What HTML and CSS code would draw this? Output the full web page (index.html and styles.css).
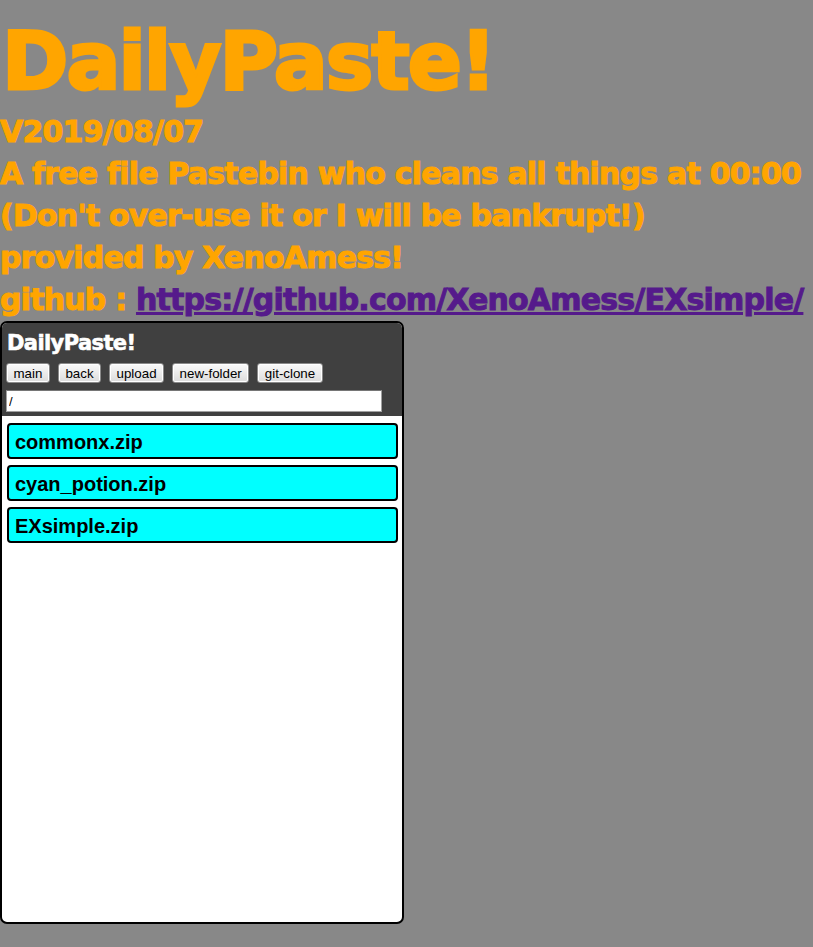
FILE: index.html
```html
<!DOCTYPE html>
<html>
<head>
<meta charset="utf-8">
<title>DailyPaste!</title>
<link rel="stylesheet" href="styles.css">
</head>
<body>
<h1 class="title">DailyPaste!</h1>
<div class="info">
  <div class="line">V2019/08/07</div>
  <div class="line">A free file Pastebin who cleans all things at 00:00</div>
  <div class="line">(Don't over-use it or I will be bankrupt!)</div>
  <div class="line">provided by XenoAmess!</div>
  <div class="line">github : <a class="repo" href="#">https://github.com/XenoAmess/EXsimple/</a></div>
</div>
<div class="panel">
  <div class="panel-head">
    <div class="panel-title">DailyPaste!</div>
    <div class="toolbar">
      <button class="btn">main</button>
      <button class="btn">back</button>
      <button class="btn">upload</button>
      <button class="btn">new-folder</button>
      <button class="btn">git-clone</button>
    </div>
    <input class="path" type="text" value="/">
  </div>
  <div class="files">
    <div class="file">commonx.zip</div>
    <div class="file">cyan_potion.zip</div>
    <div class="file">EXsimple.zip</div>
  </div>
</div>
</body>
</html>
```

FILE: styles.css
```css
html, body {
  margin: 0;
  padding: 0;
  background: #888888;
  overflow: hidden;
}
body {
  font-family: "DejaVu Sans", "Liberation Sans", sans-serif;
  font-weight: bold;
  color: #ffa500;
}
.title {
  margin: 0;
  font-size: 80px;
  line-height: 111px;
  letter-spacing: -2px;
  padding: 6px 0 0 2px;
  height: 105px;
  white-space: nowrap;
  -webkit-text-stroke: 3px #ffa500;
}
.info {
  font-size: 30px;
  line-height: 42px;
  white-space: nowrap;
  letter-spacing: -0.8px;
  -webkit-text-stroke: 1px #ffa500;
}
.line {
  height: 42px;
}
.repo {
  color: #551a8b;
  text-decoration: underline;
  -webkit-text-stroke: 1px #551a8b;
}
.panel {
  width: 400px;
  height: 599px;
  border: 2px solid #000;
  border-radius: 7px;
  background: #fff;
  overflow: hidden;
}
.panel-head {
  background: #404040;
  padding: 7px 4px 4px 4px;
  display: flex;
  flex-direction: column;
}
.panel-title {
  color: #fff;
  font-size: 21px;
  line-height: 26px;
  letter-spacing: -0.6px;
  padding-left: 1px;
  -webkit-text-stroke: 0.6px #fff;
}
.toolbar {
  display: flex;
  gap: 8px;
  margin-top: 7px;
}
.btn {
  font-family: "Liberation Sans", Arial, sans-serif;
  font-weight: normal;
  font-size: 13.33px;
  color: #000;
  height: 20px;
  padding: 0 6.5px;
  border: 1px solid #8a8a8a;
  border-radius: 3px;
  background: linear-gradient(#fafafa, #dcdcdc);
  box-shadow: inset 0 0 0 1px #fff;
  line-height: 17px;
}
.path {
  margin-top: 7px;
  width: 376px;
  height: 22px;
  box-sizing: border-box;
  border: 1px solid #a0a0a0;
  border-top-color: #767676;
  padding: 0 2px;
  font-family: "Liberation Sans", Arial, sans-serif;
  font-weight: normal;
  font-size: 13px;
  color: #000;
  background: #fff;
}
.files {
  padding: 7px 4px 0 5px;
  display: flex;
  flex-direction: column;
  gap: 6px;
}
.file {
  background: #00ffff;
  border: 2px solid #000;
  border-radius: 4px;
  height: 32px;
  line-height: 34px;
  padding-left: 6px;
  font-family: "Liberation Sans", Arial, sans-serif;
  font-size: 20px;
  color: #000;
}
```
